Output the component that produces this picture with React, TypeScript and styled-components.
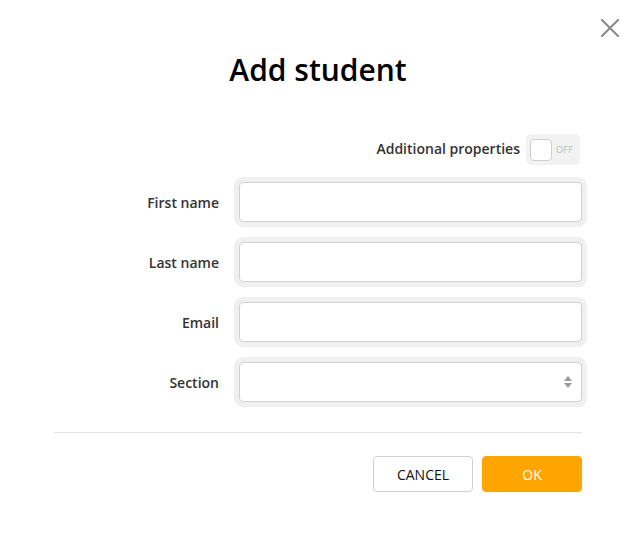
import React from "react";
import styled, { createGlobalStyle } from "styled-components";

const Global = createGlobalStyle`
  html, body { margin: 0; padding: 0; background: #fff; }
  body { font-family: "Open Sans", "Liberation Sans", sans-serif; color: #222; }
  * { box-sizing: border-box; }
`;

const Page = styled.div`
  position: relative;
  width: 638px;
  height: 538px;
  padding: 50px 56px 0 54px;
  background: #fff;
`;

const CloseButton = styled.button`
  position: absolute;
  top: 19px;
  right: 19px;
  width: 18px;
  height: 18px;
  padding: 0;
  border: none;
  background: transparent;
  cursor: pointer;
  display: flex;
`;

const Title = styled.h1`
  margin: 0;
  height: 40px;
  line-height: 40px;
  text-align: center;
  font-size: 30px;
  font-weight: 600;
  color: #000;
`;

const ToggleRow = styled.div`
  margin-top: 44px;
  margin-right: 2px;
  height: 31px;
  display: flex;
  justify-content: flex-end;
  align-items: center;
  gap: 6px;
`;

const ToggleLabel = styled.span`
  font-size: 14px;
  font-weight: 600;
  color: #333;
  margin-top: -2px;
`;

const Toggle = styled.div`
  width: 54px;
  height: 31px;
  border-radius: 5px;
  background: #f2f2f2;
  display: flex;
  align-items: center;
  padding-left: 4px;
  gap: 4px;
`;

const Knob = styled.div`
  width: 22px;
  height: 22px;
  background: #fff;
  border: 1px solid #cfcfcf;
  border-radius: 4px;
`;

const ToggleState = styled.span`
  font-size: 9px;
  color: #bbb;
  letter-spacing: 0.3px;
`;

const Form = styled.div`
  margin-top: 17px;
  display: grid;
  grid-template-columns: 165px 1fr;
  column-gap: 20px;
  row-gap: 20px;
  align-items: center;
`;

const Label = styled.label`
  text-align: right;
  font-size: 14px;
  font-weight: 600;
  color: #333;
`;

const fieldStyle = `
  width: 100%;
  height: 40px;
  border: 1px solid #d2d2d2;
  border-radius: 4px;
  background: #fff;
  box-shadow: 0 0 0 5px #f0f0f0;
  font-family: "Open Sans", "Liberation Sans", sans-serif;
  font-size: 14px;
  padding: 0 10px;
  outline: none;
`;

const Input = styled.input`
  ${fieldStyle}
`;

const SelectWrap = styled.div`
  position: relative;
`;

const Select = styled.select`
  ${fieldStyle}
  appearance: none;
  -webkit-appearance: none;
`;

const SelectArrows = styled.svg`
  position: absolute;
  right: 9px;
  top: 13px;
  pointer-events: none;
`;

const Divider = styled.hr`
  margin: 30px 0 0;
  border: none;
  border-top: 1px solid #e3e3e3;
`;

const Actions = styled.div`
  margin-top: 23px;
  display: flex;
  justify-content: flex-end;
  gap: 9px;
`;

const Button = styled.button<{ $primary?: boolean }>`
  width: 100px;
  height: 36px;
  border-radius: 4px;
  font-family: "Open Sans", "Liberation Sans", sans-serif;
  font-size: 14px;
  text-transform: uppercase;
  cursor: pointer;
  border: 1px solid ${(p) => (p.$primary ? "#ffa500" : "#d0d0d0")};
  background: ${(p) => (p.$primary ? "#ffa500" : "#fff")};
  color: ${(p) => (p.$primary ? "#fff" : "#111")};
`;

export default function App() {
  return (
    <>
      <Global />
      <Page>
        <CloseButton aria-label="Close">
          <svg width="18" height="18" viewBox="0 0 18 18">
            <path d="M1 1 L17 17 M17 1 L1 17" stroke="#8a8a8a" strokeWidth="2" strokeLinecap="square" />
          </svg>
        </CloseButton>
        <Title>Add student</Title>
        <ToggleRow>
          <ToggleLabel>Additional properties</ToggleLabel>
          <Toggle>
            <Knob />
            <ToggleState>OFF</ToggleState>
          </Toggle>
        </ToggleRow>
        <Form>
          <Label>First name</Label>
          <Input type="text" />
          <Label>Last name</Label>
          <Input type="text" />
          <Label>Email</Label>
          <Input type="text" />
          <Label>Section</Label>
          <SelectWrap>
            <Select defaultValue="">
              <option value=""></option>
            </Select>
            <SelectArrows width="10" height="14" viewBox="0 0 10 14">
              <path d="M1 6 L5 1 L9 6 Z" fill="#9a9a9a" />
              <path d="M1 8 L9 8 L5 13 Z" fill="#9a9a9a" />
            </SelectArrows>
          </SelectWrap>
        </Form>
        <Divider />
        <Actions>
          <Button>Cancel</Button>
          <Button $primary>OK</Button>
        </Actions>
      </Page>
    </>
  );
}
